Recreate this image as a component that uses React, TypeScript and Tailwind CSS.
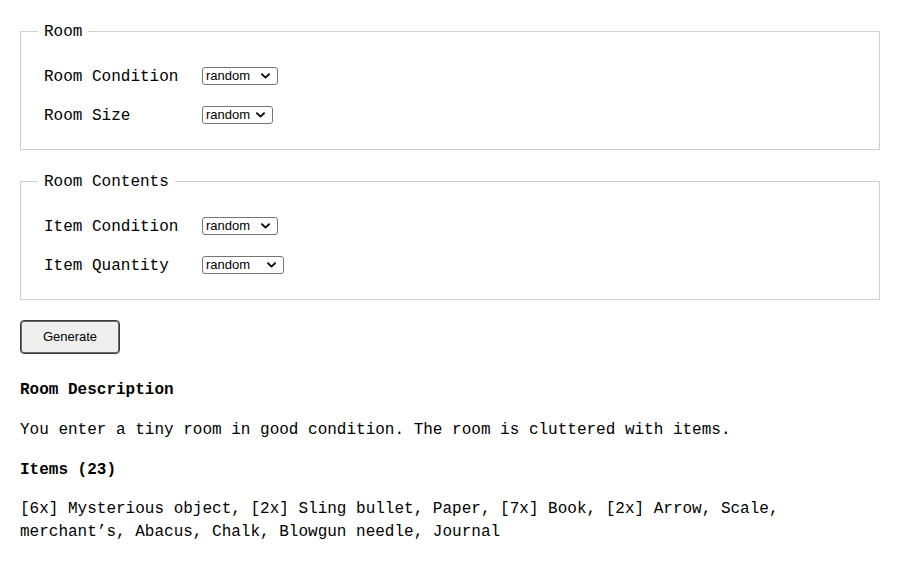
import React from "react";

const mono = { fontFamily: '"Liberation Mono", "Courier New", monospace' };

function Chevron() {
  return (
    <svg
      className="pointer-events-none absolute right-[8px] top-1/2 -translate-y-1/2"
      width="9"
      height="6"
      viewBox="0 0 9 6"
      fill="none"
    >
      <path d="M1 1.2 L4.5 4.6 L8 1.2" stroke="#111" strokeWidth="1.9" strokeLinecap="round" strokeLinejoin="round" />
    </svg>
  );
}

function Select({ width }: { width: string }) {
  return (
    <div className={`relative ${width} h-[18px]`}>
      <select
        className="block h-[18px] w-full appearance-none rounded-[3px] border border-[#767676] bg-white pl-[3px] text-[13px] leading-[16px] text-black"
        style={{ fontFamily: '"Liberation Sans", Arial, sans-serif' }}
        defaultValue="random"
      >
        <option value="random">random</option>
      </select>
      <Chevron />
    </div>
  );
}

function Row({ label, width }: { label: string; width: string }) {
  return (
    <div className="flex h-[39px] items-center pl-[6px]">
      <span className="w-[158px] pt-[2px] text-[16px] leading-[18px]">{label}</span>
      <Select width={width} />
    </div>
  );
}

function Fieldset({ legend, children, className }: { legend: string; children: React.ReactNode; className?: string }) {
  return (
    <fieldset className={`border border-[#cfcfcf] pl-[17px] pr-[17px] pb-[15px] ${className ?? ""}`}>
      <legend className="px-[6px] pt-[1px] text-[16px] leading-[18px]">{legend}</legend>
      <div className="pt-[15px]">{children}</div>
    </fieldset>
  );
}

export default function App() {
  return (
    <div className="min-h-[562px] w-[900px] bg-white px-[20px] pt-[22px] text-black" style={mono}>
      <Fieldset legend="Room">
        <Row label="Room Condition" width="w-[76px]" />
        <Row label="Room Size" width="w-[71px]" />
      </Fieldset>
      <Fieldset legend="Room Contents" className="mt-[22px]">
        <Row label="Item Condition" width="w-[76px]" />
        <Row label="Item Quantity" width="w-[82px]" />
      </Fieldset>
      <button
        className="mt-[20px] block h-[34px] w-[100px] rounded-[4px] border border-[#3a3a3a] bg-[#efefef] text-[13px] text-black shadow-[inset_0_0_0_1px_#6b6b6b]"
        style={{ fontFamily: '"Liberation Sans", Arial, sans-serif' }}
      >
        Generate
      </button>
      <h3 className="mt-[27px] text-[16px] font-bold leading-[18px]">Room Description</h3>
      <p className="mt-[22px] text-[16px] leading-[18px]">
        You enter a tiny room in good condition. The room is cluttered with items.
      </p>
      <h3 className="mt-[22px] text-[16px] font-bold leading-[18px]">Items (23)</h3>
      <p className="mt-[19px] text-[16px] leading-[23px]">
        [6x] Mysterious object, [2x] Sling bullet, Paper, [7x] Book, [2x] Arrow, Scale, merchant’s, Abacus, Chalk, Blowgun needle, Journal
      </p>
    </div>
  );
}
